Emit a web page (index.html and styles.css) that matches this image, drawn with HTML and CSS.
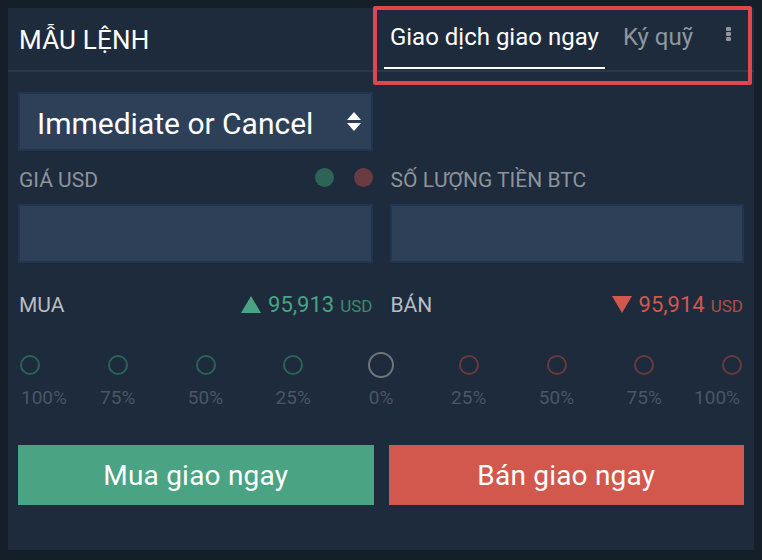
FILE: index.html
```html
<!DOCTYPE html>
<html lang="vi">
<head>
    <meta charset="UTF-8">
    <meta name="viewport" content="width=device-width, initial-scale=1.0">
    <title>Mẫu lệnh</title>
    <link rel="stylesheet" href="styles.css">
</head>
<body>
    <div class="panel">
        <header class="panel-head">
            <h1 class="title">MẪU LỆNH</h1>
            <ul class="tabs">
                <li class="tab active">Giao dịch giao ngay</li>
                <li class="tab">Ký quỹ</li>
            </ul>
            <div class="menu">
                <span></span><span></span><span></span>
            </div>
        </header>
        <div class="highlight"></div>

        <main class="panel-body">
            <div class="grid">
                <div class="select">
                    <span>Immediate or Cancel</span>
                    <svg width="14" height="20" viewBox="0 0 14 20">
                        <path d="M7 0 L14 8 L0 8 Z M0 11 L14 11 L7 19 Z" fill="#fff"/>
                    </svg>
                </div>
                <div></div>

                <div class="label-row">
                    <span class="label">GIÁ USD</span>
                    <span class="dots">
                        <i class="dot green"></i>
                        <i class="dot red"></i>
                    </span>
                </div>
                <div class="label-row">
                    <span class="label">SỐ LƯỢNG TIỀN BTC</span>
                </div>

                <div class="field"></div>
                <div class="field"></div>

                <div class="side-row">
                    <span class="side">MUA</span>
                    <span class="price up">
                        <svg width="20" height="17" viewBox="0 0 20 17"><path d="M10 0 L20 17 L0 17 Z" fill="#4aa382"/></svg>
                        <b>95,913</b> <small>USD</small>
                    </span>
                </div>
                <div class="side-row">
                    <span class="side">BÁN</span>
                    <span class="price down">
                        <svg width="20" height="17" viewBox="0 0 20 17"><path d="M0 0 L20 0 L10 17 Z" fill="#d2574c"/></svg>
                        <b>95,914</b> <small>USD</small>
                    </span>
                </div>
            </div>

            <div class="slider">
                <div class="stop buy"><i></i><span>100%</span></div>
                <div class="stop buy"><i></i><span>75%</span></div>
                <div class="stop buy"><i></i><span>50%</span></div>
                <div class="stop buy"><i></i><span>25%</span></div>
                <div class="stop mid"><i></i><span>0%</span></div>
                <div class="stop sell"><i></i><span>25%</span></div>
                <div class="stop sell"><i></i><span>50%</span></div>
                <div class="stop sell"><i></i><span>75%</span></div>
                <div class="stop sell"><i></i><span>100%</span></div>
            </div>

            <div class="actions">
                <button class="btn buy-btn">Mua giao ngay</button>
                <button class="btn sell-btn">Bán giao ngay</button>
            </div>
        </main>
    </div>
</body>
</html>
```

FILE: styles.css
```css
/* Reset */
body, h1, ul, li, button {
    margin: 0;
    padding: 0;
    box-sizing: border-box;
}

body {
    font-family: Roboto, "Liberation Sans", sans-serif;
    background-color: #141f2a;
    padding: 8px;
}

.panel {
    position: relative;
    width: 746px;
    height: 542px;
    background-color: #1d2b3c;
}

/* Header */
.panel-head {
    display: flex;
    align-items: stretch;
    height: 62px;
    border-bottom: 2px solid #2c3845;
    padding: 0 11px;
}

.title {
    font-size: 26px;
    font-weight: 400;
    color: #fff;
    line-height: 64px;
    letter-spacing: 0.2px;
}

.tabs {
    list-style-type: none;
    display: flex;
    margin-left: auto;
}

.tab {
    font-size: 24px;
    color: #8f979f;
    padding: 0 6px;
    line-height: 58px;
    height: 61px;
}

.tab + .tab {
    margin-left: 12px;
}

.tab.active {
    color: #fff;
    border-bottom: 2px solid #fff;
}

.menu {
    display: flex;
    flex-direction: column;
    gap: 1px;
    padding-top: 19px;
    margin-left: 27px;
    margin-right: 12px;
}

.menu span {
    display: block;
    width: 5px;
    height: 4px;
    border-radius: 1px;
    background-color: #8f959b;
}

.highlight {
    position: absolute;
    left: 365px;
    top: -2px;
    width: 379px;
    height: 79px;
    border: 4px solid #e0474c;
    border-radius: 2px;
    box-sizing: border-box;
}

/* Body */
.panel-body {
    padding: 20px 10px 0;
}

.grid {
    display: grid;
    grid-template-columns: 1fr 1fr;
    column-gap: 17px;
}

.select {
    display: flex;
    align-items: center;
    justify-content: space-between;
    height: 59px;
    background-color: #2e4058;
    border: 2px solid #203551;
    padding: 3px 10px 0 17px;
    color: #fff;
    font-size: 30px;
    box-sizing: border-box;
}

.select svg {
    margin-top: -3px;
}

.label-row {
    display: flex;
    align-items: center;
    justify-content: space-between;
    height: 53px;
}

.label {
    font-size: 21px;
    color: #8e949a;
    padding: 5px 0 0 1px;
}

.dots {
    display: flex;
    gap: 20px;
}

.dot {
    display: block;
    width: 19px;
    height: 19px;
    border-radius: 50%;
}

.dot.green { background-color: #2e6457; }
.dot.red { background-color: #6a3c41; }

.field {
    height: 59px;
    background-color: #2e4058;
    border: 2px solid #203551;
    box-sizing: border-box;
}

.side-row {
    display: flex;
    align-items: center;
    justify-content: space-between;
    height: 82px;
}

.side {
    font-size: 21px;
    color: #b9bdc1;
    padding: 2px 0 0 1px;
}

.price {
    display: flex;
    align-items: center;
    gap: 7px;
    font-size: 22px;
}

.price b {
    font-weight: 400;
}

.price small {
    font-size: 17px;
    margin-left: -1px;
    padding-top: 3px;
}

.price.up { color: #4aa382; }
.price.up small { color: #3f8b70; }
.price.down { color: #d2574c; }
.price.down small { color: #b34c44; padding-right: 1px; }

/* Slider */
.slider {
    display: flex;
    justify-content: space-between;
    margin-top: 7px;
}

.stop {
    width: 24px;
    display: flex;
    flex-direction: column;
    align-items: center;
}

.stop i {
    display: block;
    width: 20px;
    height: 20px;
    margin: 3px 0;
    border-radius: 50%;
    border: 2px solid;
    box-sizing: border-box;
}

.stop.buy i { border-color: #2b6455; }
.stop.sell i { border-color: #6a3a3f; }
.stop.mid i {
    width: 26px;
    height: 26px;
    margin: 0;
    border-color: #6e757e;
}

.stop span {
    font-size: 19px;
    line-height: 22px;
    color: #4a5665;
    margin-top: 9px;
    white-space: nowrap;
}

.stop:first-child { align-items: flex-start; }
.stop:first-child i { margin-left: 2px; }
.stop:first-child span { margin-left: 3px; }
.stop:last-child { align-items: flex-end; }
.stop:last-child i { margin-right: 2px; }
.stop:last-child span { margin-right: 4px; }

/* Buttons */
.actions {
    display: grid;
    grid-template-columns: 1fr 1fr;
    column-gap: 15px;
    margin-top: 36px;
}

.btn {
    height: 60px;
    border: none;
    color: #fff;
    font-family: Roboto, "Liberation Sans", sans-serif;
    font-size: 28px;
    letter-spacing: 0.2px;
    cursor: pointer;
}

.buy-btn { background-color: #4aa382; }
.sell-btn { background-color: #d2574c; }
```
